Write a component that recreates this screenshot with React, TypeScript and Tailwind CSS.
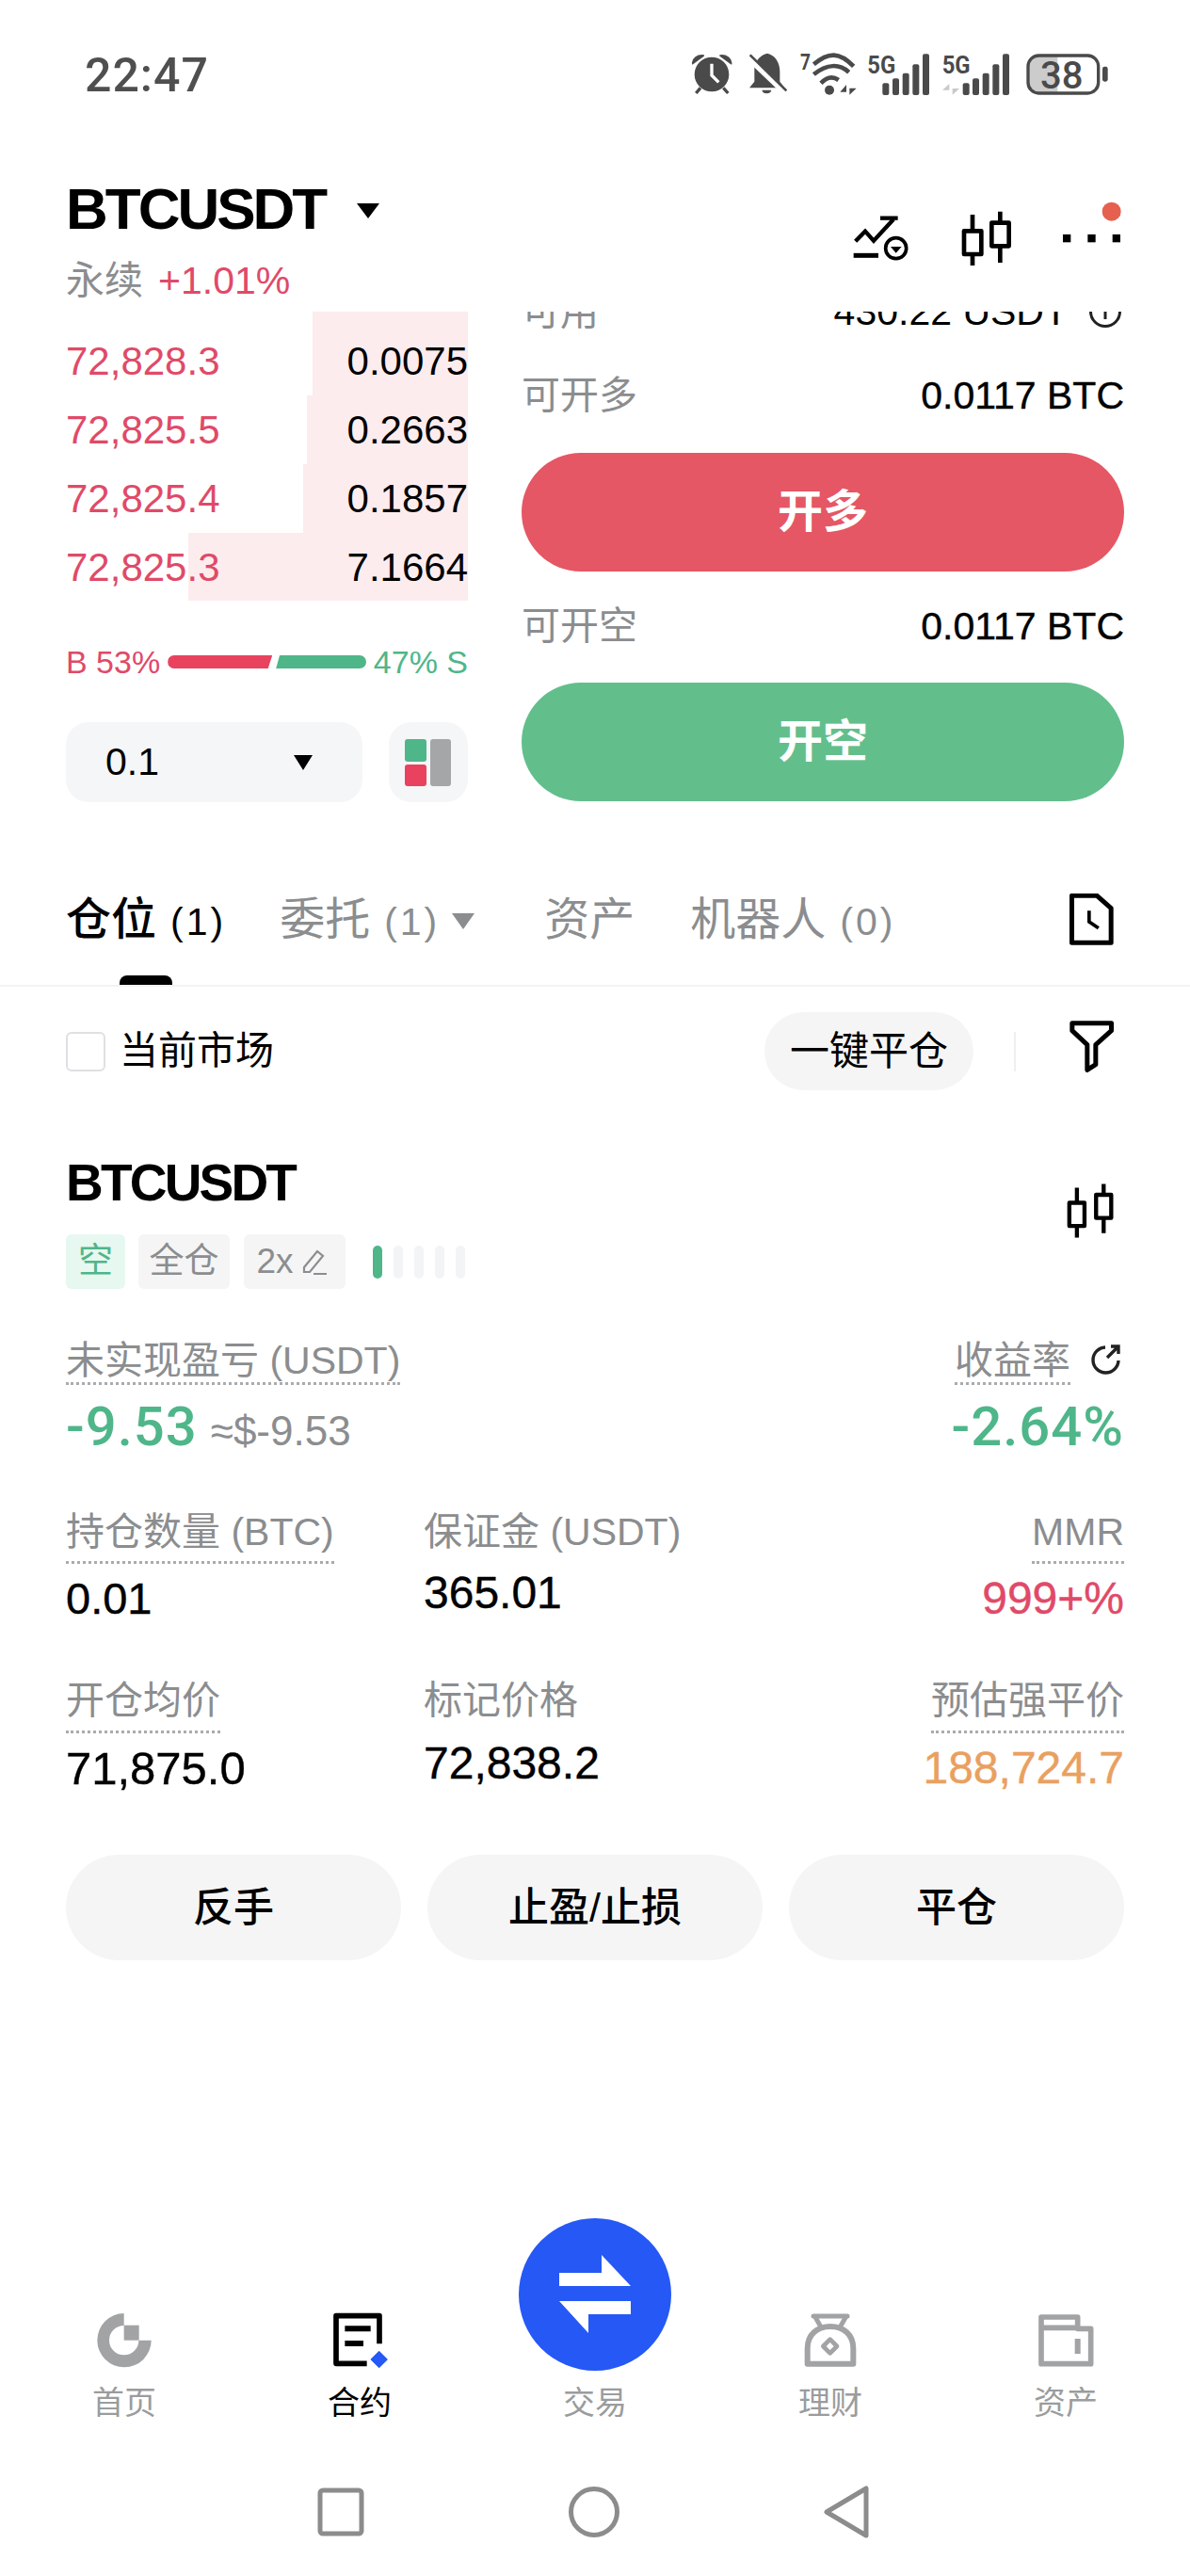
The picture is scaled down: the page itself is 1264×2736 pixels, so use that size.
import React from "react";

const red = "text-[#e04a68]";
const green = "text-[#4fb68a]";
const heavy = "[-webkit-text-stroke:0.4px]";

function StatusIcons() {
  const c = "#4a4a4a";
  return (
    <svg width="442" height="54" viewBox="45 44 1326 162" className="shrink-0">
      {/* alarm */}
      <circle cx="108" cy="122" r="55" fill={c} />
      <path d="M108 88V125L130 147" fill="none" stroke="#fff" strokeWidth="10" />
      <path d="M47 88C48 70 62 60 82 62Z" fill={c} stroke={c} strokeWidth="5" strokeLinejoin="round" />
      <path d="M170 88C169 70 155 60 135 62Z" fill={c} stroke={c} strokeWidth="5" strokeLinejoin="round" />
      <path d="M72 165L58 182M145 165L160 182" stroke={c} strokeWidth="10" />
      {/* muted bell */}
      <path d="M285 55C310 60 325 85 325 112V145L340 165H228L244 145V95C250 75 265 60 285 55Z" fill={c} />
      <path d="M268 172H298C296 186 270 186 268 172Z" fill={c} />
      <path d="M225 68L340 178" stroke="#fff" strokeWidth="20" />
      <path d="M230 60L346 174" stroke={c} strokeWidth="8" />
      {/* wifi */}
      <text x="390" y="106" fontSize="72" fontWeight="700" fill={c} fontFamily="Roboto, sans-serif" textLength="33" lengthAdjust="spacingAndGlyphs">7</text>
      <path d="M433 90C480 50 515 50 560 96" fill="none" stroke={c} strokeWidth="14" />
      <path d="M433 122C475 88 515 88 545 115" fill="none" stroke={c} strokeWidth="14" />
      <path d="M456 150C475 130 495 128 512 140" fill="none" stroke={c} strokeWidth="14" />
      <circle cx="483" cy="172" r="15" fill={c} />
      <path d="M537 187V155L517 178H537ZM547 152V187L569 166H547Z" fill={c} />
      {/* 5G 1 */}
      <text x="604" y="120" fontSize="76" fontWeight="700" fill={c} fontFamily="Roboto, sans-serif" textLength="90" lengthAdjust="spacingAndGlyphs">5G</text>
      <rect x="652" y="150" width="21" height="38" rx="6" fill={c} />
      <rect x="684" y="135" width="21" height="53" rx="6" fill={c} />
      <rect x="716" y="118" width="21" height="70" rx="6" fill={c} />
      <rect x="748" y="90" width="21" height="98" rx="6" fill={c} />
      <rect x="780" y="57" width="21" height="131" rx="6" fill={c} />
      {/* 5G 2 */}
      <text x="842" y="120" fontSize="76" fontWeight="700" fill={c} fontFamily="Roboto, sans-serif" textLength="90" lengthAdjust="spacingAndGlyphs">5G</text>
      <path d="M865 187V152L843 172H865ZM875 150V187L897 167H875Z" fill="#c9c9c9" />
      <rect x="908" y="150" width="21" height="38" rx="6" fill={c} />
      <rect x="939" y="135" width="21" height="53" rx="6" fill={c} />
      <rect x="971" y="118" width="21" height="70" rx="6" fill={c} />
      <rect x="1003" y="90" width="21" height="98" rx="6" fill={c} />
      <rect x="1035" y="57" width="21" height="131" rx="6" fill={c} />
      {/* battery */}
      <path d="M1150 64H1210V180H1150C1128 180 1117 170 1117 148V96C1117 74 1128 64 1150 64Z" fill="#cccccc" />
      <rect x="1116" y="62" width="224" height="120" rx="34" fill="none" stroke={c} strokeWidth="10" />
      <text x="1155" y="168" fontSize="120" fontWeight="500" fill={c} fontFamily="Roboto, sans-serif">38</text>
      <rect x="1353" y="97" width="17" height="48" rx="7" fill={c} />
    </svg>
  );
}

function Candle({ w, h }: { w: number; h: number }) {
  return (
    <svg width={w} height={h} viewBox="0 0 56 60" className="shrink-0">
      <g fill="none" stroke="#000" strokeWidth="4.6" strokeLinejoin="round">
        <rect x="3" y="21" width="17" height="26" />
        <rect x="33" y="12" width="17" height="26" />
        <path d="M11.5 4V21M11.5 47V60M41.5 0V12M41.5 38V55" />
      </g>
    </svg>
  );
}

function HeaderIcons() {
  return (
    <svg width="290" height="74" viewBox="70 40 870 222" className="mt-[53px] shrink-0">
      <g fill="none" stroke="#000">
        <path d="M84 170L115 138L142 168L205 100" strokeWidth="13" />
        <path d="M163 96H219" strokeWidth="13" />
        <path d="M78 215H157" strokeWidth="15" />
        <circle cx="213" cy="192" r="33" strokeWidth="11" />
      </g>
      <path d="M196 187H231L213 207Z" fill="#000" />
      <g fill="none" stroke="#000" strokeWidth="14" strokeLinejoin="round">
        <rect x="430" y="137" width="55" height="74" />
        <rect x="518" y="111" width="55" height="74" />
        <path d="M457 85V137M457 211V247M545 75V111M545 185V238" />
      </g>
      <rect x="745" y="148" width="25" height="25" fill="#000" />
      <rect x="824" y="148" width="25" height="25" fill="#000" />
      <rect x="903" y="148" width="25" height="25" fill="#000" />
      <circle cx="900" cy="75" r="30" fill="#e5604f" />
    </svg>
  );
}

const book = [
  { p: "72,828.3", q: "0.0075", bar: "w-[165px]" },
  { p: "72,825.5", q: "0.2663", bar: "w-[171px]" },
  { p: "72,825.4", q: "0.1857", bar: "w-[175px]" },
  { p: "72,825.3", q: "7.1664", bar: "w-[297px]" },
];

function Label({ children }: { children: React.ReactNode }) {
  return <div className="h-[44px] whitespace-nowrap text-[41px] leading-[44px] text-[#8b8d8f]">{children}</div>;
}

function Dotted({ children, pb = "pb-[9px]" }: { children: React.ReactNode; pb?: string }) {
  return <div className={`w-fit border-b-[3px] border-dotted border-[#a9abad] ${pb}`}>{children}</div>;
}

function NavItem({ label, active, children }: { label: string; active?: boolean; children: React.ReactNode }) {
  return (
    <div className="flex flex-col items-center">
      <div className="flex h-[60px] items-center justify-center">{children}</div>
      <div className={`mt-[14px] h-[44px] text-[34px] leading-[44px] ${active ? "text-black" : "text-[#9a9c9d]"}`}>{label}</div>
    </div>
  );
}

export default function App() {
  return (
    <div className="flex h-[2736px] w-[1264px] flex-col overflow-hidden bg-white font-['Liberation_Sans','Noto_Sans_CJK_SC',sans-serif] text-black">
      {/* status bar */}
      <div className="flex h-[160px] shrink-0 items-center justify-between pl-[90px] pr-[87px]">
        <span className="font-['Roboto',sans-serif] text-[50px] font-medium tracking-[1px] text-[#4f4f4f]">22:47</span>
        <StatusIcons />
      </div>

      {/* header */}
      <div className="flex h-[171px] shrink-0 justify-between pl-[70px] pr-[70px]">
        <div className="pt-[27px]">
          <div className="flex h-[70px] items-center">
            <span className="text-[62px] font-bold leading-[70px] tracking-[-3px]">BTCUSDT</span>
            <svg width="24" height="16" viewBox="0 0 24 16" className="ml-[34px] mt-[4px]">
              <path d="M0 0H24L12 16Z" fill="#000" />
            </svg>
          </div>
          <div className="mt-[19px] flex h-[44px] items-center text-[41px] leading-[44px]">
            <span className="text-[#8b8d8f]">永续</span>
            <span className={`ml-[16px] ${red}`}>+1.01%</span>
          </div>
        </div>
        <HeaderIcons />
      </div>

      {/* main */}
      <div className="flex h-[521px] shrink-0 gap-[57px] px-[70px]">
        <div className="w-[427px]">
          <div className="flex h-[307px] flex-col items-stretch overflow-hidden">
            <div className="h-[16px] w-[165px] shrink-0 self-end bg-[#fcecee]" />
            {book.map((r) => (
              <div key={r.p} className="relative flex h-[73px] shrink-0 items-center justify-between text-[42px]">
                <div className={`absolute right-0 top-0 h-full bg-[#fcecee] ${r.bar}`} />
                <span className={`relative ${red}`}>{r.p}</span>
                <span className="relative">{r.q}</span>
              </div>
            ))}
          </div>
          <div className="mt-[45px] flex h-[40px] items-center text-[34px]">
            <span className={red}>B 53%</span>
            <div className="ml-[8px] h-[14px] w-[111px] rounded-l-[7px] bg-[#e8425f] [clip-path:polygon(0_0,100%_0,96%_100%,0_100%)]" />
            <div className="ml-[4px] h-[14px] w-[96px] rounded-r-[7px] bg-[#4fb68a] [clip-path:polygon(4%_0,100%_0,100%_100%,0_100%)]" />
            <span className={`ml-auto ${green}`}>47% S</span>
          </div>
          <div className="mt-[44px] flex h-[85px] justify-between">
            <div className="flex w-[315px] items-center justify-between rounded-[24px] bg-[#f5f6f7] pl-[42px] pr-[53px]">
              <span className="text-[41px]">0.1</span>
              <svg width="20" height="16" viewBox="0 0 20 16">
                <path d="M0 0H20L10 16Z" fill="#000" />
              </svg>
            </div>
            <div className="flex w-[84px] items-center justify-center rounded-[24px] bg-[#f5f6f7]">
              <svg width="50" height="50" viewBox="0 0 50 50">
                <rect x="0" y="0" width="23" height="24" rx="3" fill="#4fb68a" />
                <rect x="0" y="27" width="23" height="23" rx="3" fill="#e8425f" />
                <rect x="27" y="0" width="22" height="50" rx="3" fill="#a4a6a8" />
              </svg>
            </div>
          </div>
        </div>

        <div className="w-[640px] overflow-hidden">
          <div className="-mt-[22px] flex h-[44px] items-center justify-between text-[41px] leading-[44px]">
            <span className="text-[#8b8d8f]">可用</span>
            <span className="flex items-center pr-[2px]">
              430.22 USDT
              <svg width="36" height="36" viewBox="0 0 36 36" className="ml-[22px]">
                <circle cx="18" cy="18" r="15.5" fill="none" stroke="#222" strokeWidth="3" />
                <path d="M18 10V26M11 15H25" stroke="#222" strokeWidth="3" fill="none" />
              </svg>
            </span>
          </div>
          <div className="mt-[45px] flex h-[44px] items-center justify-between leading-[44px]">
            <span className="text-[41px] text-[#8b8d8f]">可开多</span>
            <span className={`text-[41px] ${heavy}`}>0.0117 BTC</span>
          </div>
          <div className="mt-[39px] flex h-[126px] items-center justify-center rounded-full bg-[#e55764] text-[48px] font-bold text-white">开多</div>
          <div className="mt-[36px] flex h-[44px] items-center justify-between leading-[44px]">
            <span className="text-[41px] text-[#8b8d8f]">可开空</span>
            <span className={`text-[41px] ${heavy}`}>0.0117 BTC</span>
          </div>
          <div className="mt-[38px] flex h-[126px] items-center justify-center rounded-full bg-[#62bf8c] text-[48px] font-bold text-white">开空</div>
        </div>
      </div>

      {/* tabs */}
      <div className="relative flex h-[196px] shrink-0 items-start border-b-2 border-[#f2f3f4] pl-[70px] pr-[81px] pt-[100px] text-[48px] leading-[50px] text-[#8b8d8f]">
        <span className="font-medium text-black">仓位<span className="ml-[15px] text-[41px] tracking-[3px]">(1)</span></span>
        <span className="ml-[57px]">委托<span className="ml-[15px] text-[41px] tracking-[3px]">(1)</span></span>
        <svg width="24" height="17" viewBox="0 0 24 17" className="ml-[13px] mt-[18px]">
          <path d="M0 0H24L12 17Z" fill="#8b8d8f" />
        </svg>
        <span className="ml-[74px]">资产</span>
        <span className="ml-[59px]">机器人<span className="ml-[15px] text-[41px] tracking-[3px]">(0)</span></span>
        <svg width="47" height="55" viewBox="48 28 140 165" className="ml-auto -mt-[3px]">
          <path d="M55 35H135L180 75V185H55Z" fill="none" stroke="#000" strokeWidth="15" strokeLinejoin="round" />
          <path d="M110 83V118L140 138" fill="none" stroke="#000" strokeWidth="11" />
        </svg>
        <div className="absolute bottom-0 left-[127px] h-[10px] w-[56px] rounded-t-[8px] bg-black" />
      </div>

      {/* filter row */}
      <div className="flex shrink-0 items-center pl-[70px] pr-[81px] pt-[27px]">
        <div className="h-[42px] w-[42px] rounded-[6px] border-2 border-[#dfe0e2]" />
        <span className="ml-[15px] text-[41px]">当前市场</span>
        <div className="ml-auto flex h-[83px] w-[222px] items-center justify-center rounded-full bg-[#f5f5f5] text-[42px]">一键平仓</div>
        <div className="ml-[43px] h-[42px] w-[2px] bg-[#eeeff0]" />
        <svg width="47" height="55" viewBox="47 433 140 165" className="ml-[57px] -mt-[10px]">
          <path d="M55 441H180V465L130 510V573L103 590V510L55 465Z" fill="none" stroke="#000" strokeWidth="15" strokeLinejoin="round" />
        </svg>
      </div>

      {/* position */}
      <div className="mt-[68px] flex shrink-0 justify-between pl-[70px] pr-[78px]">
        <div>
          <div className="h-[60px] text-[55px] font-bold leading-[60px] tracking-[-2.8px]">BTCUSDT</div>
          <div className="mt-[25px] flex h-[58px] items-stretch text-[37px]">
            <div className={`flex w-[63px] items-center justify-center rounded-[6px] bg-[#e7f8f0] ${green}`}>空</div>
            <div className="ml-[14px] flex w-[97px] items-center justify-center rounded-[6px] bg-[#f5f5f5] text-[#8b8d8f]">全仓</div>
            <div className="ml-[15px] flex w-[108px] items-center justify-center gap-[8px] rounded-[6px] bg-[#f5f5f5] pr-[6px] text-[#8b8d8f]">
              2x
              <svg width="28" height="30" viewBox="0 0 28 30">
                <path d="M3 21L17 4L23 9L9 26H3ZM13 28H27" fill="none" stroke="#8b8d8f" strokeWidth="2.2" />
              </svg>
            </div>
            <div className="ml-[29px] flex items-center gap-[12px]">
              <div className="h-[35px] w-[10px] rounded-full bg-[#4fb68a]" />
              <div className="h-[35px] w-[10px] rounded-full bg-[#f2f4f6]" />
              <div className="h-[35px] w-[10px] rounded-full bg-[#f2f4f6]" />
              <div className="h-[35px] w-[10px] rounded-full bg-[#f2f4f6]" />
              <div className="h-[35px] w-[10px] rounded-full bg-[#f2f4f6]" />
            </div>
          </div>
        </div>
        <div className="mt-[31px]">
          <Candle w={53} h={58} />
        </div>
      </div>

      {/* stats */}
      <div className="mt-[54px] shrink-0 px-[70px]">
        <div className="flex justify-between">
          <div>
            <Dotted pb="pb-[1px]"><Label>未实现盈亏 (USDT)</Label></Dotted>
            <div className="mt-[14px] flex h-[60px] items-baseline leading-[60px]">
              <span className={`font-['Roboto',sans-serif] text-[58px] font-medium tracking-[1px] ${green}`}>-9.53</span>
              <span className="ml-[14px] text-[44px] text-[#8b8d8f]">≈$-9.53</span>
            </div>
          </div>
          <div className="flex flex-col items-end">
            <div className="flex items-start pr-[3px]">
              <Dotted pb="pb-[1px]"><Label>收益率</Label></Dotted>
              <svg width="34" height="34" viewBox="0 0 34 34" className="ml-[20px] mt-[4px]">
                <path d="M17 4A13.5 13.5 0 1 0 31 18" fill="none" stroke="#222" strokeWidth="3.4" />
                <path d="M19 15L30 4M23 3H31V11" fill="none" stroke="#222" strokeWidth="3.4" />
              </svg>
            </div>
            <div className={`mt-[14px] h-[60px] font-['Roboto',sans-serif] text-[58px] font-medium leading-[60px] tracking-[1px] ${green}`}>-2.64%</div>
          </div>
        </div>

        <div className="mt-[60px] grid grid-cols-[380px_380px_1fr]">
          <div>
            <Dotted><Label>持仓数量 (BTC)</Label></Dotted>
            <div className={`mt-[12px] h-[50px] text-[47px] leading-[50px] ${heavy}`}>0.01</div>
          </div>
          <div>
            <Label>保证金 (USDT)</Label>
            <div className={`mt-[18px] h-[50px] text-[48px] leading-[50px] ${heavy}`}>365.01</div>
          </div>
          <div className="flex flex-col items-end">
            <Dotted><Label>MMR</Label></Dotted>
            <div className={`mt-[12px] h-[50px] text-[48px] leading-[50px] ${red} ${heavy}`}>999+%</div>
          </div>
        </div>

        <div className="mt-[61px] grid grid-cols-[380px_380px_1fr]">
          <div>
            <Dotted pb="pb-[10px]"><Label>开仓均价</Label></Dotted>
            <div className={`mt-[12px] h-[50px] text-[49px] leading-[50px] ${heavy}`}>71,875.0</div>
          </div>
          <div>
            <Label>标记价格</Label>
            <div className={`mt-[20px] h-[50px] text-[48px] leading-[50px] ${heavy}`}>72,838.2</div>
          </div>
          <div className="flex flex-col items-end">
            <Dotted pb="pb-[10px]"><Label>预估强平价</Label></Dotted>
            <div className={`mt-[12px] h-[50px] text-[48px] leading-[50px] text-[#e9a060] ${heavy}`}>188,724.7</div>
          </div>
        </div>

        <div className="mt-[67px] grid grid-cols-3 gap-[28px]">
          <div className="flex h-[112px] items-center justify-center rounded-full bg-[#f5f5f5] text-[43px] font-medium">反手</div>
          <div className="flex h-[112px] items-center justify-center rounded-full bg-[#f5f5f5] text-[43px] font-medium">止盈/止损</div>
          <div className="flex h-[112px] items-center justify-center rounded-full bg-[#f5f5f5] text-[43px] font-medium">平仓</div>
        </div>
      </div>

      {/* bottom nav */}
      <div className="mt-[374px] grid shrink-0 grid-cols-5 px-[7px]">
        <NavItem label="首页">
          <svg width="60" height="60" viewBox="37 34 180 180">
            <path d="M126 37A86 86 0 1 0 213 123H173A47 47 0 1 1 126 76Z" fill="#a1a3a4" />
            <path d="M126 75H174V123H126Z" fill="#a1a3a4" />
          </svg>
        </NavItem>
        <NavItem label="合约" active>
          <svg width="60" height="60" viewBox="785 35 180 180">
            <path d="M938 135V46H800V198H898" fill="none" stroke="#000" strokeWidth="17" strokeLinejoin="round" />
            <path d="M828 78H910V96H828ZM828 125H887V143H828Z" fill="#000" />
            <path d="M937 160L962 185L937 210L912 185Z" fill="#2558f5" stroke="#2558f5" strokeWidth="4" strokeLinejoin="round" />
          </svg>
        </NavItem>
        <div className="relative">
          <div className="absolute -top-[100px] left-1/2 flex h-[162px] w-[162px] -translate-x-1/2 items-center justify-center rounded-full bg-[#2558f5]">
            <svg width="76" height="84" viewBox="0 0 76 84">
              <path d="M0 19H45V0L76 33H0Z" fill="#fff" />
              <path d="M76 49H0L31 83V63H76Z" fill="#fff" />
            </svg>
          </div>
          <NavItem label="交易">
            <div className="h-[60px]" />
          </NavItem>
        </div>
        <NavItem label="理财">
          <svg width="60" height="60" viewBox="36 35 180 180">
            <g fill="none" stroke="#a1a3a4" strokeLinejoin="round" strokeLinecap="round">
              <path d="M72 47H180" strokeWidth="15" />
              <path d="M78 50L95 80M175 50L158 80" strokeWidth="15" />
              <path d="M53 199V150C53 105 85 80 126 80C167 80 199 105 199 150V199Z" strokeWidth="18" />
              <path d="M125 121L147 143L125 165L103 143Z" strokeWidth="14" />
            </g>
          </svg>
        </NavItem>
        <NavItem label="资产">
          <svg width="60" height="60" viewBox="785 33 180 180">
            <g fill="none" stroke="#a1a3a4" strokeLinejoin="round">
              <path d="M797 197V48H913V85H955V197Z" strokeWidth="17" />
              <path d="M797 82H913" strokeWidth="17" />
              <path d="M913 117V165" strokeWidth="18" />
            </g>
          </svg>
        </NavItem>
      </div>

      {/* system nav */}
      <div className="mt-[66px] flex shrink-0 items-center gap-[217px] pl-[337px]">
        <svg width="50" height="52" viewBox="0 0 50 52">
          <rect x="3" y="3" width="44" height="46" rx="3" fill="none" stroke="#8c8c8c" strokeWidth="5" />
        </svg>
        <svg width="54" height="56" viewBox="0 0 54 56">
          <circle cx="27" cy="28" r="24.5" fill="none" stroke="#8c8c8c" strokeWidth="5" />
        </svg>
        <svg width="48" height="56" viewBox="0 0 48 56">
          <path d="M45 3V53L3 28Z" fill="none" stroke="#8c8c8c" strokeWidth="5" strokeLinejoin="round" />
        </svg>
      </div>
    </div>
  );
}
